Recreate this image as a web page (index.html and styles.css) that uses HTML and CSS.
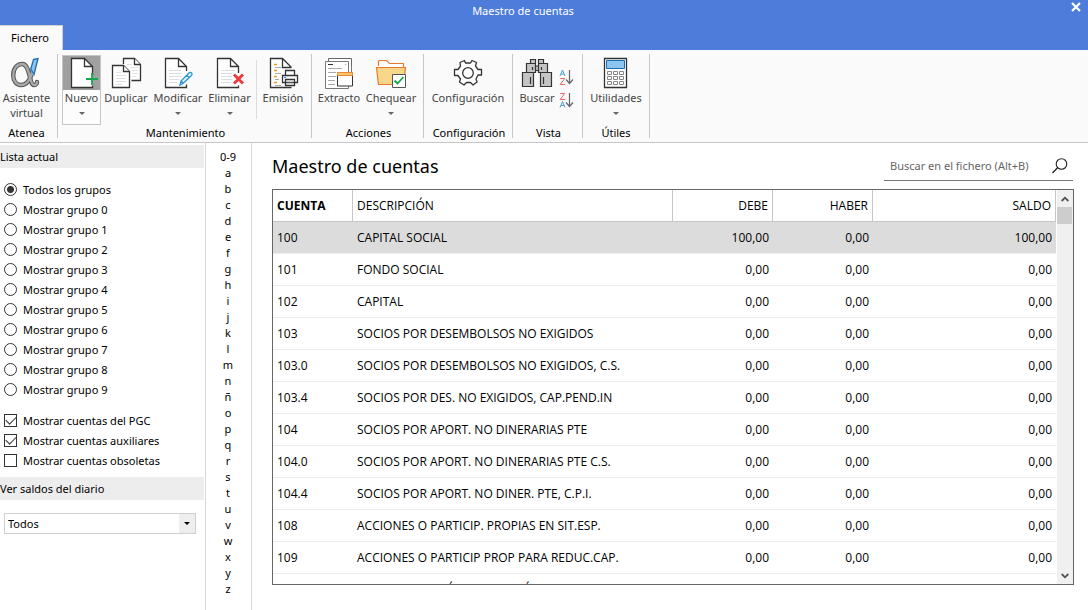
FILE: index.html
```html
<!DOCTYPE html>
<html lang="es">
<head>
<meta charset="utf-8">
<title>Maestro de cuentas</title>
<link rel="stylesheet" href="styles.css">
</head>
<body>
<div class="app">
<header class="titlebar">
  <div class="title">Maestro de cuentas</div>
  <button class="close" aria-label="Cerrar"><svg width="10" height="10" viewBox="0 0 10 10"><path d="M1 1l8 8M9 1l-8 8" stroke="#fff" stroke-width="2.2"/></svg></button>
  <nav class="tabs"><button class="tab">Fichero</button></nav>
</header>

<div class="ribbon">
  <section class="group g-atenea">
    <div class="tools">
      <button class="tool t-asistente">
        <svg width="32" height="32" viewBox="0 0 32 32"><g fill="none" stroke-linecap="round"><path d="M24.500 10c-1.500 8-4.500 18-12.500 18-4.500 0-7.800-3.800-7.800-10s3.800-11 9-11c8 0 7 20.500 11.500 21 2.500.3 3.300-1.500 3.300-3" stroke="#555" stroke-width="4.400"/><path d="M24.500 10c-1.500 8-4.500 18-12.500 18-4.500 0-7.800-3.800-7.800-10s3.800-11 9-11c8 0 7 20.500 11.500 21 2.500.3 3.300-1.500 3.300-3" stroke="#a8a8a8" stroke-width="2.400"/></g><path d="M23 1h8l-5 20-5-9z" fill="#fafafa"/><path d="M24.500 2.500L29 1.500 25 17.500 21.800 12z" fill="#8ec5ee" stroke="#1d6fb5" stroke-width="1.300"/></svg>
        <span>Asistente<br>virtual</span>
      </button>
    </div>
    <h2 class="group-name">Atenea</h2>
  </section>

  <section class="group g-mant">
    <div class="tools">
      <button class="tool t-nuevo active">
        <svg width="32" height="32" viewBox="0 0 32 32"><path d="M5 1.500h13.500l8 8V30.500H5z" fill="#fff"/><path d="M26.500 18.500v-9l-8-8H5.500v29h21v-2M18.500 1.500v8h8" fill="none" stroke="#333" stroke-width="1.300"/><path d="M26 16v12M20 22h12" stroke="#12a84b" stroke-width="1.800"/></svg>
        <span>Nuevo</span><i class="caret"></i>
      </button>
      <button class="tool t-duplicar">
        <svg width="32" height="32" viewBox="0 0 32 32"><g fill="#fff" stroke="#333" stroke-width="1.300"><path d="M13.500 7V1.500h11l6 6v16h-9"/><path d="M24.500 1.500v6h6"/><path d="M2.500 8.500h11l6 6v16h-17z"/><path d="M13.500 8.500v6h6"/></g><path d="M6 15.500h5M6 18.500h10M6 21.500h10M6 24.500h10M6 27.500h6M17 7.500h5M20 10.500h8M22 13.500h6M22 16.500h6M22 19.500h4" stroke="#e2e2e2"/></svg>
        <span>Duplicar</span>
      </button>
      <button class="tool t-modificar">
        <svg width="32" height="32" viewBox="0 0 32 32"><path d="M24.500 14V9.500l-8-8H3.500v29h21v-3M16.500 1.500v8h8" fill="#fff" stroke="#333" stroke-width="1.300"/><path d="M7 13.500h12M7 16.500h12M7 19.500h12M7 22.500h10M7 25.500h8" stroke="#ddd"/><path d="M18 28l1-4 8-8c2-2 4 1 2.500 2.500l-8.500 8zM24.500 18l3 3M19 24l2.500 2.500" fill="#e4f2fb" stroke="#2b93d1" stroke-width="1.300"/></svg>
        <span>Modificar</span><i class="caret"></i>
      </button>
      <button class="tool t-eliminar">
        <svg width="32" height="32" viewBox="0 0 32 32"><path d="M24.500 16V9.500l-8-8H3.500v29h21v-2M16.500 1.500v8h8" fill="#fff" stroke="#333" stroke-width="1.300"/><path d="M7 13.500h14M7 16.500h11M7 19.500h11M7 22.500h11M7 25.500h10" stroke="#ddd"/><path d="M20 17.500l9 9M29 17.500l-9 9" stroke="#f2383a" stroke-width="2.900"/></svg>
        <span>Eliminar</span><i class="caret"></i>
      </button>
      <div class="divider"></div>
      <button class="tool t-emision">
        <svg width="32" height="32" viewBox="0 0 32 32"><path d="M24.500 10.500l-9-9H3.500v29h21M15.500 1.500v9h9" fill="#fff" stroke="#333" stroke-width="1.300"/><path d="M7 7.500h3M7 13.500h3M7 19.500h3M7 25.500h3" stroke="#f09a1c" stroke-width="1.400"/><path d="M8 10.500h6M8 16.500h6M8 22.500h4M8 28.500h6" stroke="#aaa"/><path d="M18.500 18v-4.500h9V18M15.500 18.500h15v7h-15zM18.500 22.500h9v6h-9z" fill="#fff" stroke="#333" stroke-width="1.300"/><path d="M20 25.500h6" stroke="#555"/><path d="M17 20.500h2" stroke="#2b93d1"/></svg>
        <span>Emisión</span>
      </button>
    </div>
    <h2 class="group-name">Mantenimiento</h2>
  </section>

  <section class="group g-acc">
    <div class="tools">
      <button class="tool t-extracto">
        <svg width="32" height="32" viewBox="0 0 32 32"><path d="M5.500 4V1.500h23V15" fill="#fff" stroke="#666"/><path d="M2.500 4.500h23v27h-23z" fill="#fff" stroke="#777"/><path d="M25.500 28.500h3v-20" fill="none" stroke="#777"/><path d="M5 7.500h5" stroke="#333"/><path d="M22 7.500h1M5 11.500h14M5 15.500h8M5 19.500h8M5 23.500h7M5 27.500h7" stroke="#aaa"/><path d="M14.500 16h15v13h-15z" fill="#fff" stroke="#333"/><path d="M14.500 15.500h15v3h-15z" fill="#f8c46e" stroke="#e98b35"/></svg>
        <span>Extracto</span>
      </button>
      <button class="tool t-chequear">
        <svg width="32" height="32" viewBox="0 0 32 32"><path d="M3.500 9V4.500q0-1 1-1h7l3 3h14V11" fill="#fff" stroke="#e8782c" stroke-width="1.200"/><path d="M1.500 10.500h29l-2 17h-25z" fill="#f7d78a" stroke="#e8782c" stroke-width="1.200"/><path d="M17.500 17.500h13v13h-13z" fill="#fff" stroke="#555"/><path d="M19.500 23.500l3 3 6-6.500" fill="none" stroke="#12a84b" stroke-width="1.800"/></svg>
        <span>Chequear</span><i class="caret"></i>
      </button>
    </div>
    <h2 class="group-name">Acciones</h2>
  </section>

  <section class="group g-conf">
    <div class="tools">
      <button class="tool t-config">
        <svg width="32" height="32" viewBox="0 0 32 32"><path d="M13.500 6l-1-2.500-4.500 2 .5 3.500-2.500 3.500H2.500v6H6L8.500 22 7.500 25l4.500 3 2.500-2.500h4L21 28l4-3-1-3 2-4h3.500v-5.500H26L23.500 9l1-3.500-4.500-2-1.500 2.500z" fill="#fff" stroke="#333" stroke-width="1.300" stroke-linejoin="round"/><circle cx="16" cy="16" r="5.300" fill="#fff" stroke="#333" stroke-width="1.300"/></svg>
        <span>Configuración</span>
      </button>
    </div>
    <h2 class="group-name">Configuración</h2>
  </section>

  <section class="group g-vista">
    <div class="tools">
      <button class="tool t-buscar">
        <svg width="32" height="32" viewBox="0 0 32 32"><g fill="#c4c4c4" stroke="#333" stroke-width="1.200"><path d="M9.500 2.500h5v4h-5zM17.500 2.500h5v4h-5zM14.500 9h3v4.500h-3zM5.500 6.500h9v9h-9zM17.500 6.500h9v9h-9zM1.500 15.500h11v14h-11zM19.500 15.500h11v14h-11z"/></g><path d="M9.500 20v7M22.500 20v7M11.500 10v3M20.500 10v3" stroke="#333" stroke-width="1.200"/></svg>
        <span>Buscar</span>
      </button>
      <div class="sorts">
        <button class="sort" aria-label="Orden ascendente"><svg width="16" height="18" viewBox="0 0 16 18"><path d="M2 8l2.500-6L7 8M3 6h3" fill="none" stroke="#4a9fd8"/><path d="M2.200 10.500h4.500L2.200 16.500h5" fill="none" stroke="#e96565"/><path d="M11.500 2v13M8 11.500l3.500 4 3.500-4" fill="none" stroke="#666" stroke-width="1.200"/></svg></button>
        <button class="sort" aria-label="Orden descendente"><svg width="16" height="18" viewBox="0 0 16 18"><path d="M2.200 2.500h4.500L2.200 8.500h5" fill="none" stroke="#e96565"/><path d="M2 16.500l2.500-6L7 16.500M3 14.500h3" fill="none" stroke="#4a9fd8"/><path d="M11.500 2v13M8 11.500l3.500 4 3.500-4" fill="none" stroke="#666" stroke-width="1.200"/></svg></button>
      </div>
    </div>
    <h2 class="group-name">Vista</h2>
  </section>

  <section class="group g-utiles">
    <div class="tools">
      <button class="tool t-util">
        <svg width="32" height="32" viewBox="0 0 32 32"><path d="M4.500 1.500h22v29h-22z" fill="#fff" stroke="#333" stroke-width="1.300"/><path d="M6.500 3.500h18v8h-18z" fill="#8ec5ee" stroke="#1d6fb5"/><path d="M7.500 14.500h4v3h-4zM13.500 14.500h4v3h-4zM19.500 14.500h4v3h-4zM7.500 19.500h4v3h-4zM13.500 19.500h4v3h-4zM19.500 19.500h4v3h-4zM7.500 24.500h4v3h-4zM13.500 24.500h4v3h-4zM19.500 24.500h4v3h-4z" fill="none" stroke="#888"/></svg>
        <span>Utilidades</span><i class="caret"></i>
      </button>
    </div>
    <h2 class="group-name">Útiles</h2>
  </section>
</div>

<div class="workspace">
  <aside class="sidebar">
    <h3 class="side-title">Lista actual</h3>
    <div class="options radios">
      <label><input type="radio" name="grupo" checked>Todos los grupos</label>
      <label><input type="radio" name="grupo">Mostrar grupo 0</label>
      <label><input type="radio" name="grupo">Mostrar grupo 1</label>
      <label><input type="radio" name="grupo">Mostrar grupo 2</label>
      <label><input type="radio" name="grupo">Mostrar grupo 3</label>
      <label><input type="radio" name="grupo">Mostrar grupo 4</label>
      <label><input type="radio" name="grupo">Mostrar grupo 5</label>
      <label><input type="radio" name="grupo">Mostrar grupo 6</label>
      <label><input type="radio" name="grupo">Mostrar grupo 7</label>
      <label><input type="radio" name="grupo">Mostrar grupo 8</label>
      <label><input type="radio" name="grupo">Mostrar grupo 9</label>
    </div>
    <div class="options checks">
      <label><input type="checkbox" checked>Mostrar cuentas del PGC</label>
      <label><input type="checkbox" checked>Mostrar cuentas auxiliares</label>
      <label><input type="checkbox">Mostrar cuentas obsoletas</label>
    </div>
    <h3 class="side-title"><label for="diario">Ver saldos del diario</label></h3>
    <div class="select-box">
      <select id="diario"><option>Todos</option></select>
      <span class="select-arrow"></span>
    </div>
  </aside>

  <nav class="letters">
    <a href="#0-9">0-9</a><a href="#a">a</a><a href="#b">b</a><a href="#c">c</a><a href="#d">d</a><a href="#e">e</a><a href="#f">f</a><a href="#g">g</a><a href="#h">h</a><a href="#i">i</a><a href="#j">j</a><a href="#k">k</a><a href="#l">l</a><a href="#m">m</a><a href="#n">n</a><a href="#ñ">ñ</a><a href="#o">o</a><a href="#p">p</a><a href="#q">q</a><a href="#r">r</a><a href="#s">s</a><a href="#t">t</a><a href="#u">u</a><a href="#v">v</a><a href="#w">w</a><a href="#x">x</a><a href="#y">y</a><a href="#z">z</a>
  </nav>

  <main class="content">
    <div class="content-head">
      <h1>Maestro de cuentas</h1>
      <div class="search">
        <input type="text" placeholder="Buscar en el fichero (Alt+B)" aria-label="Buscar en el fichero">
        <button aria-label="Buscar"><svg width="16" height="16" viewBox="0 0 16 16"><circle cx="9.500" cy="6" r="5.300" fill="none" stroke="#222" stroke-width="1.100"/><path d="M5.500 9.800L.5 15" stroke="#222" stroke-width="1.300"/></svg></button>
      </div>
    </div>
    <div class="grid">
      <div class="rows">
        <table>
          <colgroup><col class="c-cuenta"><col class="c-desc"><col class="c-num"><col class="c-num"><col></colgroup>
          <thead><tr><th class="sorted">CUENTA</th><th>DESCRIPCIÓN</th><th class="n">DEBE</th><th class="n">HABER</th><th class="n">SALDO</th></tr></thead>
          <tbody>
            <tr class="selected"><td>100</td><td>CAPITAL SOCIAL</td><td>100,00</td><td>0,00</td><td>100,00</td></tr>
            <tr><td>101</td><td>FONDO SOCIAL</td><td>0,00</td><td>0,00</td><td>0,00</td></tr>
            <tr><td>102</td><td>CAPITAL</td><td>0,00</td><td>0,00</td><td>0,00</td></tr>
            <tr><td>103</td><td>SOCIOS POR DESEMBOLSOS NO EXIGIDOS</td><td>0,00</td><td>0,00</td><td>0,00</td></tr>
            <tr><td>103.0</td><td>SOCIOS POR DESEMBOLSOS NO EXIGIDOS, C.S.</td><td>0,00</td><td>0,00</td><td>0,00</td></tr>
            <tr><td>103.4</td><td>SOCIOS POR DES. NO EXIGIDOS, CAP.PEND.IN</td><td>0,00</td><td>0,00</td><td>0,00</td></tr>
            <tr><td>104</td><td>SOCIOS POR APORT. NO DINERARIAS PTE</td><td>0,00</td><td>0,00</td><td>0,00</td></tr>
            <tr><td>104.0</td><td>SOCIOS POR APORT. NO DINERARIAS PTE C.S.</td><td>0,00</td><td>0,00</td><td>0,00</td></tr>
            <tr><td>104.4</td><td>SOCIOS POR APORT. NO DINER. PTE, C.P.I.</td><td>0,00</td><td>0,00</td><td>0,00</td></tr>
            <tr><td>108</td><td>ACCIONES O PARTICIP. PROPIAS EN SIT.ESP.</td><td>0,00</td><td>0,00</td><td>0,00</td></tr>
            <tr><td>109</td><td>ACCIONES O PARTICIP PROP PARA REDUC.CAP.</td><td>0,00</td><td>0,00</td><td>0,00</td></tr>
            <tr><td>110</td><td>PRIMA DE EMISIÓN O ASUNCIÓN</td><td>0,00</td><td>0,00</td><td>0,00</td></tr>
          </tbody>
        </table>
      </div>
      <div class="scrollbar">
        <button aria-label="Subir"><svg width="8" height="6" viewBox="0 0 8 6"><path d="M.7 5L4 1.700 7.300 5" fill="none" stroke="#505050" stroke-width="1.800"/></svg></button>
        <div class="thumb"></div>
        <button class="down" aria-label="Bajar"><svg width="8" height="6" viewBox="0 0 8 6"><path d="M.7 1L4 4.300 7.300 1" fill="none" stroke="#505050" stroke-width="1.800"/></svg></button>
      </div>
    </div>
  </main>
</div>
</div>
</body>
</html>
```
FILE: styles.css
```css
* { box-sizing: border-box; }
body {
  margin: 0;
  font: 11px/15px "Noto Sans", "Open Sans", sans-serif;
  color: #000;
  background: #fff;
}
button, input, select { font: inherit; color: inherit; border: 0; background: none; padding: 0; margin: 0; }
h1, h2, h3 { margin: 0; font-weight: 400; }
.app { display: flex; flex-direction: column; height: 100vh; overflow: hidden; }

.titlebar {
  display: grid;
  grid-template-columns: 24px 1fr 24px;
  grid-template-rows: 25px 25px;
  background: #4d7cdb;
}
.title { grid-column: 2; color: #fff; text-align: center; line-height: 22px; padding-right: 42px; }
.close { grid-column: 3; display: flex; justify-content: center; padding-top: 2px; }
.tabs { grid-row: 2; grid-column: 1 / -1; display: flex; }
.tab { width: 63px; padding: 0 2px 1px 0; background: #fafafa; border-top: 1px solid #d0d0d0; border-right: 1px solid #d0d0d0; }

.ribbon { display: flex; background: #fafafa; border-bottom: 1px solid #c6c6c6; padding: 4px 0; height: 93px; flex: none; }
.group { display: flex; flex-direction: column; justify-content: space-between; border-right: 1px solid #c6c6c6; height: 84px; }
.tools { display: flex; justify-content: center; }
.group-name { font-size: 11px; text-align: center; line-height: 10px; }
.g-atenea { width: 58px; padding-right: 4px; }
.g-mant { width: 254px; padding-left: 2px; }
.g-acc { width: 112px; }
.g-acc .tools { padding-right: 3px; }
.g-acc .group-name { padding-left: 2px; }
.g-conf { width: 89px; }
.g-conf .group-name { padding-left: 2px; }
.g-vista { width: 70px; }
.g-vista .tools { padding-right: 5px; }
.g-vista .group-name { padding-left: 2px; }
.g-utiles { width: 67px; }
.tool { display: flex; flex-direction: column; align-items: center; border: 1px solid transparent; height: 70px; margin-top: 1px; color: #444; white-space: nowrap; }
.tool svg { display: block; flex: none; margin: 1px 0; }
.tool.active { border-color: #c6c6c6; background: linear-gradient(#a0a0a0 34px, #fcfcfc 34px); }
.caret { border: 3px solid transparent; border-top-color: #666; border-bottom: 0; margin-top: 7px; }
.t-asistente svg { margin-right: 3px; }
.t-nuevo { width: 39px; }
.t-duplicar { width: 50px; }
.t-modificar { width: 54px; }
.t-eliminar { width: 49px; }
.t-emision { width: 52px; }
.divider { width: 1px; height: 59px; margin: 6px 0 0 2px; background: #ddd; }
.t-extracto { width: 50px; }
.t-chequear { width: 54px; }
.t-buscar { width: 42px; }
.sorts { display: flex; flex-direction: column; gap: 5px; padding-top: 14px; }
.sort { height: 18px; }
.sort svg { display: block; }

.workspace { display: flex; flex: 1; min-height: 0; }
.sidebar { width: 206px; flex: none; border-right: 1px solid #d8d8d8; padding: 2px 1px 0 0; }
.side-title { background: #ededed; font-size: 11px; line-height: 23px; }
.options { display: flex; flex-direction: column; padding-left: 4px; }
.options label { display: flex; align-items: center; gap: 6px; height: 20px; }
.radios { padding-top: 11px; }
.checks { padding: 11px 0 7px 4px; }
.options input { appearance: none; width: 13px; height: 13px; border: 1px solid #333; background: #fff; flex: none; }
.radios input { border-radius: 50%; }
.radios input:checked { background: radial-gradient(circle, #333 3px, #fff 4px); }
.checks input { display: grid; place-items: center; }
.checks input:checked::after { content: ""; width: 9px; height: 5px; margin-bottom: 2px; border: solid #333; border-width: 0 0 1px 1px; transform: rotate(-45deg); }
.select-box { position: relative; display: flex; margin: 13px 8px 0 4px; height: 21px; border: 1px solid #d0d0d0; }
.select-box select { appearance: none; flex: 1; padding-left: 3px; }
.select-arrow { position: absolute; right: 0; top: 0; bottom: 0; width: 16px; display: flex; align-items: center; justify-content: center; background: #eee; pointer-events: none; }
.select-arrow::before { content: ""; border: 3px solid transparent; border-top-color: #000; border-bottom: 0; }

.letters { width: 46px; flex: none; border-right: 1px solid #d8d8d8; display: flex; flex-direction: column; padding: 6px 1px 0 0; text-align: center; }
.letters a { color: #000; text-decoration: none; line-height: 16px; }

.content { flex: 1; min-width: 0; display: flex; flex-direction: column; padding: 8px 14px 25px 20px; }
.content-head { display: flex; justify-content: space-between; height: 38px; }
h1 { font-size: 18px; line-height: 30px; }
.search { display: flex; align-items: center; width: 189px; height: 30px; margin-right: 1px; border-bottom: 1px solid #777; padding: 0 5px 0 6px; }
.search input { flex: 1; min-width: 0; outline: 0; }
.search input::placeholder { color: #666; opacity: 1; }
.search svg { display: block; }

.grid { flex: 1; min-height: 0; display: flex; border: 1px solid #666; }
.rows { flex: 1; min-width: 0; overflow: hidden; margin-right: 1px; }
table { width: 100%; border-collapse: separate; border-spacing: 0; table-layout: fixed; font: 12px/16px "Open Sans", "Noto Sans", sans-serif; }
.c-cuenta { width: 80px; }
.c-desc { width: 320px; }
.c-num { width: 100px; }
th, td { height: 32px; padding: 0 4px; text-align: left; white-space: nowrap; border-bottom: 1px solid #eee; }
th { font-weight: 400; border-right: 1px solid #c6c6c6; border-bottom-color: #c6c6c6; }
th.sorted { font-weight: 700; }
th.n, td:nth-child(n+3) { text-align: right; }
.selected td { background: #dcdcdc; }
.scrollbar { width: 16px; background: #f0f0f0; display: flex; flex-direction: column; padding-right: 1px; }
.scrollbar button { height: 17px; display: flex; align-items: center; justify-content: center; }
.thumb { height: 17px; background: #cdcdcd; }
.down { margin-top: auto; }
```
